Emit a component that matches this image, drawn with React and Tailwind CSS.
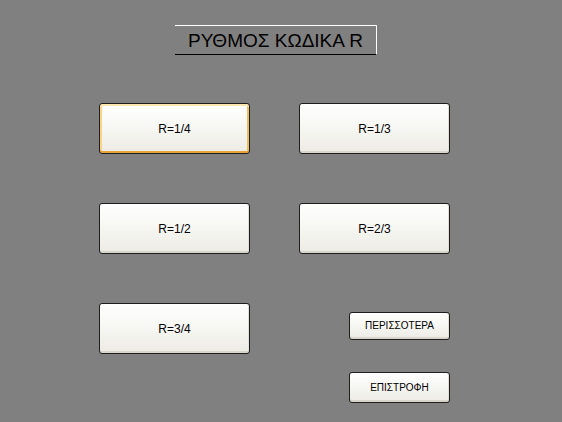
import React from "react";

function Btn({ label, focused, w, h, small }) {
  return (
    <div
      className={`box-border rounded-[3px] border border-[#1e1e1e] bg-gradient-to-b from-[#ffffff] via-[#f6f6f2] to-[#ecebe4] flex items-center justify-center ${
        focused
          ? "shadow-[inset_0_2px_0_#fde7b0,inset_0_-2px_0_#e8a33a,inset_2px_0_0_#f9d38a,inset_-2px_0_0_#f0bd5e]"
          : "shadow-[inset_0_-2px_0_#d8d6cc,inset_-1px_0_0_#e2e0d8]"
      }`}
      style={{ width: w, height: h }}
    >
      <span
        className={`text-black ${small ? "text-[10px]" : "text-[12px]"} leading-none`}
        style={{ fontFamily: '"Liberation Sans", Arial, sans-serif' }}
      >
        {label}
      </span>
    </div>
  );
}

export default function App() {
  return (
    <div
      className="w-[562px] h-[422px] bg-[#808080] overflow-hidden flex flex-col"
      style={{ fontFamily: '"Liberation Sans", Arial, sans-serif' }}
    >
      <div className="mt-[25px] ml-[175px] w-[202px] h-[30px] box-border border-t border-r border-b border-t-white border-r-white border-b-black flex items-center justify-center">
        <span className="text-[19px] text-black leading-none">ΡΥΘΜΟΣ ΚΩΔΙΚΑ R</span>
      </div>
      <div className="mt-[48px] ml-[99px] grid grid-cols-[151px_151px] gap-x-[49px] gap-y-[49px]">
        <Btn label="R=1/4" focused w={151} h={51} />
        <Btn label="R=1/3" w={151} h={51} />
        <Btn label="R=1/2" w={151} h={51} />
        <Btn label="R=2/3" w={151} h={51} />
      </div>
      <div className="mt-[49px] ml-[99px] flex">
        <Btn label="R=3/4" w={151} h={51} />
        <div className="ml-[99px] pt-[9px] flex flex-col gap-[32px]">
          <Btn label="ΠΕΡΙΣΣΟΤΕΡΑ" small w={101} h={28} />
          <Btn label="ΕΠΙΣΤΡΟΦΗ" small w={101} h={31} />
        </div>
      </div>
    </div>
  );
}
